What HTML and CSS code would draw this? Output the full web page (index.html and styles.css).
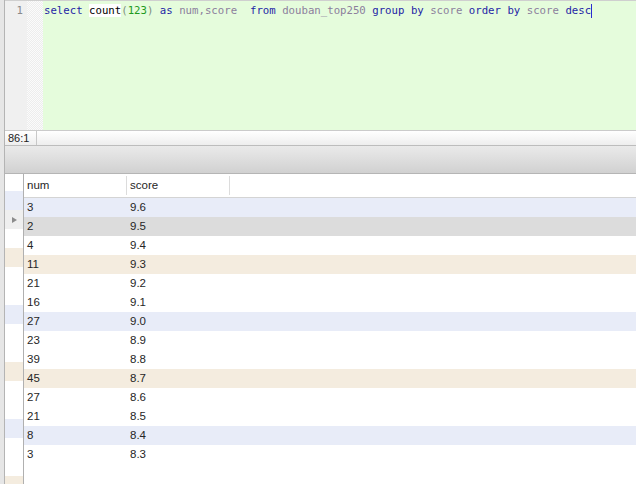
FILE: index.html
```html
<!DOCTYPE html>
<html>
<head>
<meta charset="utf-8">
<link rel="stylesheet" href="styles.css">
</head>
<body>
<div class="app">
  <div class="main">
    <div class="editor">
      <div class="gutter"><span class="ln">1</span></div>
      <div class="fold"></div>
      <div class="code"><span class="kw">select</span> <span class="fn">count</span><span class="p">(</span><span class="nm">123</span><span class="p">)</span> <span class="kw">as</span> <span class="id">num,score</span>  <span class="kw">from</span> <span class="id">douban_top250</span> <span class="kw">group</span> <span class="kw">by</span> <span class="id">score</span> <span class="kw">order</span> <span class="kw">by</span> <span class="id">score</span> <span class="kw">desc</span><span class="cursor"></span></div>
    </div>
    <div class="status"><span class="pos">86:1</span></div>
    <div class="toolbar"></div>
    <div class="grid">
      <div class="rowhdr">
        <div class="rh-head"></div>
        <div class="rh blue"></div>
        <div class="rh sel"><svg width="5" height="6" viewBox="0 0 5 6"><path d="M0 0 L5 3 L0 6 Z" fill="#8c8c8c"/></svg></div>
        <div class="rh"></div>
        <div class="rh beige"></div>
        <div class="rh"></div>
        <div class="rh"></div>
        <div class="rh blue"></div>
        <div class="rh"></div>
        <div class="rh"></div>
        <div class="rh beige"></div>
        <div class="rh"></div>
        <div class="rh"></div>
        <div class="rh blue"></div>
        <div class="rh"></div>
        <div class="rh"></div>
        <div class="rh beige"></div>
      </div>
      <div class="data">
        <div class="hdr"><span class="hc">num</span><span class="hc">score</span></div>
        <div class="row blue"><span class="c">3</span><span class="c">9.6</span></div>
        <div class="row sel"><span class="c">2</span><span class="c">9.5</span></div>
        <div class="row"><span class="c">4</span><span class="c">9.4</span></div>
        <div class="row beige"><span class="c">11</span><span class="c">9.3</span></div>
        <div class="row"><span class="c">21</span><span class="c">9.2</span></div>
        <div class="row"><span class="c">16</span><span class="c">9.1</span></div>
        <div class="row blue"><span class="c">27</span><span class="c">9.0</span></div>
        <div class="row"><span class="c">23</span><span class="c">8.9</span></div>
        <div class="row"><span class="c">39</span><span class="c">8.8</span></div>
        <div class="row beige"><span class="c">45</span><span class="c">8.7</span></div>
        <div class="row"><span class="c">27</span><span class="c">8.6</span></div>
        <div class="row"><span class="c">21</span><span class="c">8.5</span></div>
        <div class="row blue"><span class="c">8</span><span class="c">8.4</span></div>
        <div class="row"><span class="c">3</span><span class="c">8.3</span></div>
      </div>
    </div>
  </div>
</div>
</body>
</html>
```
FILE: styles.css
```css
html, body {
  margin: 0;
  padding: 0;
}
body {
  width: 636px;
  height: 484px;
  overflow: hidden;
  font-family: "Liberation Sans", Arial, sans-serif;
  background: #fff;
}
.app {
  display: flex;
  height: 484px;
  padding-left: 4px;
  background: #e6e6e6;
}
.main {
  flex: 1;
  min-width: 0;
  border-left: 1px solid #b4b4b4;
  display: flex;
  flex-direction: column;
  background: #fff;
}
.editor {
  height: 129px;
  border-top: 1px solid #cfcfcf;
  display: flex;
  font-family: "DejaVu Sans Mono", monospace;
  font-size: 10.7px;
  line-height: 14px;
}
.gutter {
  width: 18px;
  padding-right: 4px;
  padding-top: 3px;
  text-align: right;
  background: #f0f0f0;
  color: #8a8a8a;
}
.fold {
  width: 16px;
  background: repeating-conic-gradient(#ededed 0 25%, #fbfbfb 0 50%) 0 0 / 2px 2px;
}
.code {
  flex: 1;
  padding-top: 3px;
  padding-left: 1px;
  background: #e5fcdc;
  white-space: pre;
  color: #8c7f9c;
}
.kw { color: #1f1fa6; }
.fn { color: #000; background: #fff; }
.p { color: #7f8f7f; }
.nm { color: #1f9a1f; }
.id { color: #8c7f9c; }
.cursor {
  display: inline-block;
  width: 1px;
  height: 14px;
  vertical-align: top;
  background: #2b2bd0;
}
.status {
  height: 14px;
  border-top: 1px solid #cbcbcb;
  border-bottom: 1px solid #bdbdbd;
  background: linear-gradient(#ffffff, #eeeeee);
  display: flex;
  font-size: 11px;
  line-height: 14px;
  color: #222;
}
.pos {
  width: 28px;
  padding-left: 3px;
  border-right: 1px solid #c8c8c8;
}
.toolbar {
  height: 27px;
  border-bottom: 1px solid #b5b5b5;
  background: linear-gradient(#eaeaea, #d1d1d1);
}
.grid {
  flex: 1;
  display: flex;
  min-height: 0;
  overflow: hidden;
}
.rowhdr {
  width: 18px;
  border-right: 1px solid #b0b0b0;
  display: flex;
  flex-direction: column;
  flex-shrink: 0;
}
.rh-head {
  height: 17px;
  flex-shrink: 0;
}
.rh {
  height: 19px;
  flex-shrink: 0;
  display: flex;
  align-items: center;
  padding-left: 7px;
}
.rh.blue { background: #e8ecf8; }
.rh.beige { background: #f4ecdf; }
.rh.sel { background: #efefef; }
.data {
  flex: 1;
  display: flex;
  flex-direction: column;
  font-size: 11.5px;
  color: #262626;
}
.hdr {
  height: 23px;
  border-bottom: 1px solid #d4d4d4;
  display: flex;
  align-items: center;
  flex-shrink: 0;
}
.hc {
  width: 99px;
  padding-left: 3px;
  height: 19px;
  line-height: 19px;
  border-right: 1px solid #dcdcdc;
}
.row {
  height: 19px;
  line-height: 19px;
  display: flex;
  flex-shrink: 0;
}
.row.blue { background: #e8ecf8; }
.row.beige { background: #f4ecdf; }
.row.sel { background: #dcdcdc; }
.c {
  width: 100px;
  padding-left: 3px;
}
```
